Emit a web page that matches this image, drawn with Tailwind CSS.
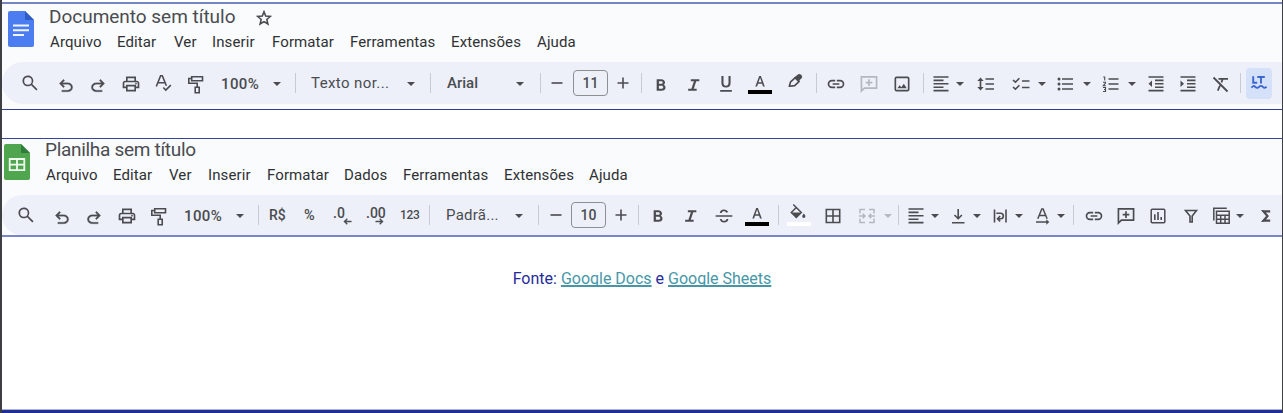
<!DOCTYPE html>
<html lang="pt-BR">
<head>
<meta charset="utf-8">
<title>Google Docs e Google Sheets</title>
<script src="https://cdn.jsdelivr.net/npm/@tailwindcss/browser@4"></script>
</head>
<body class="bg-white">
<svg class="hidden">
  <symbol id="search" viewBox="0 0 24 24"><path d="M19.6 21l-6.3-6.3A6.5 6.5 0 1 1 14.7 13.3l6.3 6.3zM9.5 14a4.5 4.5 0 1 0 0-9 4.5 4.5 0 0 0 0 9z"/></symbol>
  <symbol id="undo" viewBox="0 -960 960 960"><path d="M280-200v-80h284q63 0 109.500-40T720-420q0-60-46.500-100T564-560H312l104 104-56 56-200-200 200-200 56 56-104 104h252q97 0 166.500 63T800-420q0 94-69.500 157T564-200H280Z" stroke="currentColor" stroke-width="12"/></symbol>
  <symbol id="print" viewBox="0 -960 960 960"><path d="M640-640v-120H320v120h-80v-200h480v200h-80Zm80 180q17 0 28.500-11.500T760-500q0-17-11.500-28.500T720-540q-17 0-28.500 11.500T680-500q0 17 11.500 28.500T720-460Zm-80 260v-160H320v160h320Zm80 80H240v-160H80v-240q0-51 35-85.500t85-34.500h560q51 0 85.500 34.500T880-520v240H720v160Zm80-240v-160q0-17-11.500-28.500T760-560H200q-17 0-28.500 11.500T160-520v160h80v-80h480v80h80Z"/></symbol>
  <symbol id="spell" viewBox="0 0 20 20"><path d="M3.300 13.500L7.600 2.700h1.700l4.100 10M5 9.800h6.500M10.300 14.500l2.500 2.600 5-5" fill="none" stroke="currentColor" stroke-width="1.600"/></symbol>
  <symbol id="roller" viewBox="0 0 20 20"><path d="M5.700 1.800h10.800v3.900H5.700zM5.500 3.500H2.800v4.700h8.400v4M9.200 12.300h4v5.500h-4z" fill="none" stroke="currentColor" stroke-width="1.600"/></symbol>
  <symbol id="caret" viewBox="0 0 10 10"><path d="M1 3h8L5 7z"/></symbol>
  <symbol id="minus" viewBox="0 0 20 20"><path d="M4.500 9.200h11v1.600h-11z"/></symbol>
  <symbol id="plus" viewBox="0 0 20 20"><path d="M9.200 4.500h1.600v4.700h4.700v1.600h-4.700v4.700H9.200v-4.700H4.500V9.200h4.700z"/></symbol>
  <symbol id="bold" viewBox="0 0 24 24"><path d="M6.800 19V5h5.500c2.600 0 4.500 1.500 4.500 3.900 0 1.400-.8 2.400-1.700 2.900 1.400.5 2.300 1.700 2.300 3.300 0 2.500-2 3.900-4.700 3.900zm2.700-8.400h2.700c1.200 0 1.900-.7 1.900-1.600 0-1-.7-1.600-1.900-1.600H9.500zm0 6h3.100c1.300 0 2.100-.7 2.100-1.800s-.8-1.800-2.100-1.800H9.500z"/></symbol>
  <symbol id="italic" viewBox="0 0 24 24"><path d="M5 19v-2.400h3.900l3-9.200H8.200V5h10.200v2.400h-3.700l-3 9.200h3.500V19z"/></symbol>
  <symbol id="underline" viewBox="0 0 24 24"><path d="M5 20.500h14v1.900H5zM12 17.500c-3.500 0-5.500-2-5.500-5.600V3.500H9v8.500c0 2 1 3.200 3 3.200s3-1.200 3-3.200V3.500h2.500v8.400c0 3.600-2 5.600-5.500 5.600z"/></symbol>
  <symbol id="strike" viewBox="0 0 24 24"><path d="M2 11h20v2H2zM12 4.200c2.400 0 4.200 1 5 3.100l-2.200.9c-.4-1.100-1.300-1.900-2.800-1.900-1.600 0-2.600.7-2.700 2.200H7c0-2.500 2-4.300 5-4.300zM7 15.500h2.200c.3 1.500 1.400 2.200 2.900 2.200 1.700 0 2.800-.8 2.800-2.200h2.300c0 2.600-2 4.300-5.100 4.300-2.700 0-4.700-1.400-5.100-4.300z"/></symbol>
  <symbol id="lettera" viewBox="0 0 20 20"><path d="M5.300 14.500L9.200 4h1.700l3.900 10.500H13l-.9-2.700H8l-.9 2.700zM8.500 10.300h3.100L10.100 5.800z"/></symbol>
  <symbol id="marker" viewBox="0 0 20 20"><path d="M4.300 15.300l1.300-4.500 4.700-4.200 3.900 3.700-4.500 4.300z" fill="none" stroke="currentColor" stroke-width="1.600" stroke-linejoin="round"/><path d="M9 6.800l3.300-2.900c1.300-1.100 2.800-1 3.900 0 1.200 1.100 1.300 2.500.1 3.700L13 10.800z"/></symbol>
  <symbol id="link" viewBox="0 0 24 24"><path d="M11 17H7A5 5 0 0 1 7 7h4v2H7a3 3 0 0 0 0 6h4zm-3-4v-2h8v2zm5 4v-2h4a3 3 0 0 0 0-6h-4V7h4a5 5 0 0 1 0 10z"/></symbol>
  <symbol id="comment" viewBox="0 0 24 24"><path d="M2.900 20.500V3.500h18.200v13.500H6.500zM12 6.300v8M8 10.300h8" fill="none" stroke="currentColor" stroke-width="2"/></symbol>
  <symbol id="image" viewBox="0 0 24 24"><rect x="4" y="4" width="16" height="16" rx="1.500" fill="none" stroke="currentColor" stroke-width="2"/><path d="M6.500 17l2.700-3.500 2 2.300 3-4 3.500 5.200z"/></symbol>
  <symbol id="align" viewBox="0 0 20 20"><path d="M2.500 3h15M2.500 6.400h10M2.500 9.800h15M2.500 13.200h10M2.500 16.600h15" stroke="currentColor" stroke-width="1.600"/></symbol>
  <symbol id="spacing" viewBox="0 0 20 20"><path d="M9.500 5h8.500M9.500 10h8.500M9.500 15h8.500M4.500 5v10" stroke="currentColor" stroke-width="1.700"/><path d="M1.300 7L4.500 3.600 7.700 7zM1.300 13l3.200 3.400L7.700 13z"/></symbol>
  <symbol id="check" viewBox="0 0 20 20"><path d="M2 6l2.400 2.200 4-4M2 13l2.400 2.200 4-4M11 7h7.500M11 13.500h7.500" fill="none" stroke="currentColor" stroke-width="1.600"/></symbol>
  <symbol id="bullets" viewBox="0 0 20 20"><path d="M7 5h11M7 10h11M7 15h11" stroke="currentColor" stroke-width="1.700"/><circle cx="4" cy="5" r="1.500"/><circle cx="4" cy="10" r="1.500"/><circle cx="4" cy="15" r="1.500"/></symbol>
  <symbol id="numbers" viewBox="0 0 20 20"><path d="M7.500 5H17.500M7.500 10H17.500M7.500 15H17.500" stroke="currentColor" stroke-width="1.700"/><path d="M2.200 3h1.500v3.500M2 8.300h2.500v.7L2.300 11.700h2.600M2 13.500h2.500v4H2M3 15.500h1.500" fill="none" stroke="currentColor" stroke-width="1.100"/></symbol>
  <symbol id="outdent" viewBox="0 0 20 20"><path d="M2.500 3h15M9 6.400h8.500M9 9.800h8.500M9 13.200h8.500M2.500 16.600h15" stroke="currentColor" stroke-width="1.600"/><path d="M6 6.500v6.600L2.500 9.800z"/></symbol>
  <symbol id="indent" viewBox="0 0 20 20"><path d="M2.500 3h15M9 6.400h8.500M9 9.800h8.500M9 13.200h8.500M2.500 16.600h15" stroke="currentColor" stroke-width="1.600"/><path d="M2.500 6.500v6.600L6 9.800z"/></symbol>
  <symbol id="clear" viewBox="0 0 20 20"><path d="M2.500 3.500l14 14M7.500 4.800h9.500M11.700 5l-1.300 3.500M9 11.500l-2.200 5.200" fill="none" stroke="currentColor" stroke-width="1.800"/></symbol>
  <symbol id="lt" viewBox="0 0 20 20"><path d="M4.200 3.200v6.500h4M8.300 4h7.500M12 4v6.500" fill="none" stroke="currentColor" stroke-width="1.900"/><path d="M2.500 14.700q1.900-2.800 3.800-.8t3.800 0q1.900-2 3.800 0t3.600-.2" fill="none" stroke="currentColor" stroke-width="1.900"/></symbol>
  <symbol id="fill" viewBox="0 0 20 20"><path d="M6.300 1.500l8 8-5 5-5-5 5-5" fill="none" stroke="currentColor" stroke-width="1.500"/><path d="M4.300 9.500h10l-5 5zM16.800 10.500c1.200 1.500 1.600 2.200 1.600 2.800a1.600 1.600 0 0 1-3.200 0c0-.6.5-1.300 1.600-2.800z"/></symbol>
  <symbol id="borders" viewBox="0 0 20 20"><path d="M3.300 3.500h13.400v13H3.300zM10 3.500v13M3.300 10h13.400" fill="none" stroke="currentColor" stroke-width="1.600"/></symbol>
  <symbol id="merge" viewBox="0 0 20 20"><path d="M8 3.500H3v4M12 3.500h5v4M8 16.500H3v-4M12 16.500h5v-4M2 10h5.500M18 10h-5.500M5.800 7.700L8 10l-2.200 2.300M14.200 7.700L12 10l2.200 2.300" fill="none" stroke="currentColor" stroke-width="1.500"/></symbol>
  <symbol id="valign" viewBox="0 0 20 20"><path d="M4 16.700h12.500M10.200 3v9.500M6.500 9l3.700 3.700L13.900 9" fill="none" stroke="currentColor" stroke-width="1.600"/></symbol>
  <symbol id="wrap" viewBox="0 0 20 20"><path d="M4.500 3.500v13M16 3.500v13M6.300 7.300h4.300a2.700 2.700 0 0 1 0 5.400H8M10.200 10l-2.700 2.700 2.700 2.700" fill="none" stroke="currentColor" stroke-width="1.600"/></symbol>
  <symbol id="rotate" viewBox="0 0 20 20"><path d="M4.800 12.700L8.800 3h1.300l4 9.700M6.300 9.500h6.300M3 16h11" fill="none" stroke="currentColor" stroke-width="1.500"/><path d="M13.300 13.300v5.400l3-2.700z"/></symbol>
  <symbol id="chart" viewBox="0 0 20 20"><rect x="3.200" y="3.200" width="13.600" height="13.600" rx="1" fill="none" stroke="currentColor" stroke-width="1.500"/><path d="M6.800 8.200v5.800M10 6v8M13.200 11v3" stroke="currentColor" stroke-width="1.600"/></symbol>
  <symbol id="filter" viewBox="0 0 20 20"><path d="M4.500 4.500h11L11.200 10v6H9v-6z" fill="none" stroke="currentColor" stroke-width="1.600"/></symbol>
  <symbol id="table" viewBox="0 0 20 20"><path d="M1.800 14.500V2.300h13M4.500 5.200h12.700v12H4.500zM4.500 9.200h12.700M4.500 13.200h12.700M8.700 9.200v8M13 9.200v8" fill="none" stroke="currentColor" stroke-width="1.500"/></symbol>
  <symbol id="sigma" viewBox="0 0 20 20"><path d="M14.200 5.400H7.500L11.500 10l-4 4.700h6.700" fill="none" stroke="currentColor" stroke-width="2.200"/><path d="M5.300 4.300h2.500v2.500zM5.300 15.800h2.500v-2.500z"/></symbol>
</svg>

<div class="w-[1283px] h-[413px] overflow-hidden flex flex-col border-l-2 border-r border-[#3e3f43] font-[Roboto,sans-serif] text-[#4a4c50] whitespace-nowrap">
  <!-- Docs -->
  <section class="mt-[2px] h-[108px] shrink-0 border-t-2 border-t-[#7584c5] border-b border-b-[#303d91] bg-[#f9fbfd] flex flex-col">
    <div class="flex h-[58px]">
      <svg class="ml-[6px] mt-[7px] w-[26px] h-[36px] shrink-0" viewBox="0 0 26 36"><path d="M2 0H17l9 9v25a2 2 0 0 1-2 2H2a2 2 0 0 1-2-2V2a2 2 0 0 1 2-2z" fill="#4b7df0"/><path d="M17 0l9 9h-9z" fill="#2f5cc5"/><path d="M5 14.500h16M5 19.200h16M5 23.900h11" stroke="#f1f5ff" stroke-width="2"/></svg>
      <div class="ml-[15px]">
        <div class="flex h-[26px] items-center">
          <h1 class="mt-px w-[207px] text-[19px] -tracking-[.02px]">Documento sem título</h1>
          <svg class="w-[16px] h-[16px] mt-[2px]" viewBox="0 0 16 16"><path d="M8 1.800l1.700 4.300 4.600.4-3.500 3 1.100 4.500L8 11.600 4.100 14l1.100-4.500-3.500-3 4.600-.4z" fill="none" stroke="currentColor" stroke-width="1.600"/></svg>
        </div>
        <nav class="ml-[1px] flex h-[25px] items-center text-[15px] tracking-[.1px] text-[#303134]">
          <a class="w-[67px]">Arquivo</a><a class="w-[57px]">Editar</a><a class="w-[38px]">Ver</a><a class="w-[60px]">Inserir</a><a class="w-[78px]">Formatar</a><a class="w-[101px]">Ferramentas</a><a class="w-[86px]">Extensões</a><a>Ajuda</a>
        </nav>
      </div>
    </div>
    <div class="h-[42px] rounded-l-[21px] bg-[#edf0f9] flex items-center text-[15px] font-medium fill-current *:shrink-0">
      <svg class="ml-[18px] size-5"><use href="#search"/></svg>
      <svg class="ml-[16px] mt-[5px] size-5"><use href="#undo"/></svg>
      <svg class="ml-[12px] mt-[5px] size-5 -scale-x-100"><use href="#undo"/></svg>
      <svg class="ml-[13px] mt-[2px] size-5"><use href="#print"/></svg>
      <svg class="ml-[12px] size-5"><use href="#spell"/></svg>
      <svg class="ml-[13px] mt-[4px] size-5"><use href="#roller"/></svg>
      <span class="ml-[15px] mt-[2px] w-[40px] tracking-[.35px]">100%</span>
      <svg class="ml-[11px] mt-[2px] size-[10px]"><use href="#caret"/></svg>
      <i class="ml-[13px] w-px h-5 bg-[#c7cad1]"></i>
      <span class="ml-[15px] w-[78px] font-[450] tracking-[.4px]">Texto nor...</span>
      <svg class="ml-[17px] mt-[2px] size-[10px]"><use href="#caret"/></svg>
      <i class="ml-[14px] w-px h-5 bg-[#c7cad1]"></i>
      <span class="ml-[16px] w-[34px]">Arial</span>
      <svg class="ml-[34px] mt-[2px] size-[10px]"><use href="#caret"/></svg>
      <i class="ml-[15px] w-px h-5 bg-[#c7cad1]"></i>
      <svg class="ml-[6px] size-5"><use href="#minus"/></svg>
      <span class="ml-[6px] w-[35px] h-[26px] border border-[#8d9092] rounded flex items-center justify-center text-[14px]">11</span>
      <svg class="ml-[5px] size-5"><use href="#plus"/></svg>
      <i class="ml-[8px] w-px h-5 bg-[#c7cad1]"></i>
      <svg class="ml-[9px] mt-[3px] size-5"><use href="#bold"/></svg>
      <svg class="ml-[13px] mt-[3px] size-5"><use href="#italic"/></svg>
      <svg class="ml-[12px] size-5"><use href="#underline"/></svg>
      <span class="ml-[12px] w-[24px] h-[22px] border-b-4 border-black flex justify-center"><svg class="size-5"><use href="#lettera"/></svg></span>
      <svg class="ml-[13px] mb-[4px] size-5"><use href="#marker"/></svg>
      <i class="ml-[11px] w-px h-5 bg-[#c7cad1]"></i>
      <svg class="ml-[9px] mt-[2px] size-5"><use href="#link"/></svg>
      <svg class="ml-[13px] mt-[2px] size-5 text-[#b4b7bf]"><use href="#comment"/></svg>
      <svg class="ml-[13px] mt-[2px] size-5"><use href="#image"/></svg>
      <i class="ml-[11px] w-px h-5 bg-[#c7cad1]"></i>
      <svg class="ml-[7px] mt-[2px] size-5"><use href="#align"/></svg>
      <svg class="ml-[4px] mt-[2px] size-[10px]"><use href="#caret"/></svg>
      <svg class="ml-[11px] mt-[2px] size-5"><use href="#spacing"/></svg>
      <svg class="ml-[15px] mt-[2px] size-5"><use href="#check"/></svg>
      <svg class="ml-[6px] mt-[2px] size-[10px]"><use href="#caret"/></svg>
      <svg class="ml-[8px] mt-[2px] size-5"><use href="#bullets"/></svg>
      <svg class="ml-[7px] mt-[2px] size-[10px]"><use href="#caret"/></svg>
      <svg class="ml-[9px] mt-[2px] size-5"><use href="#numbers"/></svg>
      <svg class="ml-[6px] mt-[2px] size-[10px]"><use href="#caret"/></svg>
      <svg class="ml-[9px] mt-[2px] size-5"><use href="#outdent"/></svg>
      <svg class="ml-[12px] mt-[2px] size-5"><use href="#indent"/></svg>
      <svg class="ml-[13px] mt-[2px] size-5"><use href="#clear"/></svg>
      <i class="ml-[9px] w-px h-5 bg-[#c7cad1]"></i>
      <span class="ml-[5px] w-[26px] h-[31px] rounded bg-[#d5e0f9] text-[#3d67d0] flex items-center justify-center"><svg class="size-5"><use href="#lt"/></svg></span>
    </div>
  </section>

  <!-- Sheets -->
  <section class="mt-[28px] h-[99px] shrink-0 border-t border-t-[#3644a1] border-b-2 border-b-[#7886c7] bg-[#f9fbfd] flex flex-col">
    <div class="flex h-[56px]">
      <svg class="ml-[2px] mt-[5px] w-[26px] h-[36px] shrink-0" viewBox="0 0 26 36"><path d="M2 0H17l9 9v25a2 2 0 0 1-2 2H2a2 2 0 0 1-2-2V2a2 2 0 0 1 2-2z" fill="#4fa64f"/><path d="M17 0l9 9h-9z" fill="#2f7d3b"/><path d="M5.700 15h14.600v11.200H5.700zM13 15v11.200M5.700 20.600h14.600" fill="none" stroke="#f1faf1" stroke-width="1.800"/></svg>
      <div class="ml-[15px]">
        <h1 class="h-[22px] leading-[21px] text-[19px] -tracking-[.3px]">Planilha sem título</h1>
        <nav class="ml-[1px] flex h-[28px] items-center text-[15px] tracking-[.1px] text-[#303134]">
          <a class="w-[67px]">Arquivo</a><a class="w-[56px]">Editar</a><a class="w-[39px]">Ver</a><a class="w-[59px]">Inserir</a><a class="w-[77px]">Formatar</a><a class="w-[59px]">Dados</a><a class="w-[101px]">Ferramentas</a><a class="w-[85px]">Extensões</a><a>Ajuda</a>
        </nav>
      </div>
    </div>
    <div class="h-[40px] rounded-l-[20px] bg-[#edf0f9] flex items-center text-[15px] font-medium fill-current *:shrink-0">
      <svg class="ml-[14px] size-5"><use href="#search"/></svg>
      <svg class="ml-[16px] mt-[5px] size-5"><use href="#undo"/></svg>
      <svg class="ml-[12px] mt-[5px] size-5 -scale-x-100"><use href="#undo"/></svg>
      <svg class="ml-[13px] mt-[2px] size-5"><use href="#print"/></svg>
      <svg class="ml-[12px] mt-[4px] size-5"><use href="#roller"/></svg>
      <span class="ml-[15px] mt-[2px] w-[40px] tracking-[.35px]">100%</span>
      <svg class="ml-[11px] mt-[2px] size-[10px]"><use href="#caret"/></svg>
      <i class="ml-[13px] w-px h-5 bg-[#c7cad1]"></i>
      <span class="ml-[10px] mt-px w-[20px] text-[14px]">R$</span>
      <span class="ml-[15px] mt-px w-[14px] text-[14.500px]">%</span>
      <span class="ml-[15px] w-[20px] h-[22px] text-[14px] leading-[18px] relative">.0<svg class="absolute left-[10px] top-[14px] w-[9px] h-[7px]" viewBox="0 0 9 7"><path d="M8.500 3.500H2M4.300.8L1.500 3.500l2.800 2.700" fill="none" stroke="currentColor" stroke-width="1.400"/></svg></span>
      <span class="ml-[13px] w-[20px] h-[22px] text-[14px] leading-[18px] relative">.00<svg class="absolute left-[9px] top-[14px] w-[9px] h-[7px]" viewBox="0 0 9 7"><path d="M.5 3.500H7M4.700.8l2.800 2.700-2.800 2.700" fill="none" stroke="currentColor" stroke-width="1.400"/></svg></span>
      <span class="ml-[14px] w-[20px] text-[12px] -tracking-[.3px]">123</span>
      <i class="ml-[9px] w-px h-5 bg-[#c7cad1]"></i>
      <span class="ml-[16px] w-[52px] font-[450] tracking-[.25px]">Padrã...</span>
      <svg class="ml-[16px] mt-[2px] size-[10px]"><use href="#caret"/></svg>
      <i class="ml-[14px] w-px h-5 bg-[#c7cad1]"></i>
      <svg class="ml-[7px] size-5"><use href="#minus"/></svg>
      <span class="ml-[5px] w-[35px] h-[26px] border border-[#8d9092] rounded flex items-center justify-center text-[14px]">10</span>
      <svg class="ml-[5px] size-5"><use href="#plus"/></svg>
      <i class="ml-[7px] w-px h-5 bg-[#c7cad1]"></i>
      <svg class="ml-[9px] mt-[2px] size-5"><use href="#bold"/></svg>
      <svg class="ml-[13px] mt-[2px] size-5"><use href="#italic"/></svg>
      <svg class="ml-[13px] mt-[2px] size-5"><use href="#strike"/></svg>
      <span class="ml-[11px] w-[24px] h-[22px] border-b-4 border-black flex justify-center"><svg class="size-5"><use href="#lettera"/></svg></span>
      <i class="ml-[9px] w-px h-5 bg-[#c7cad1]"></i>
      <span class="ml-[8px] w-[24px] h-[22px] border-b-4 border-white flex"><svg class="size-5 -mt-px"><use href="#fill"/></svg></span>
      <svg class="ml-[12px] mt-[2px] size-5"><use href="#borders"/></svg>
      <svg class="ml-[14px] mt-[2px] size-5 text-[#b4b7bf]"><use href="#merge"/></svg>
      <svg class="ml-[6px] mt-[2px] size-[10px] fill-[#b4b7bf]"><use href="#caret"/></svg>
      <i class="ml-[5px] w-px h-5 bg-[#c7cad1]"></i>
      <svg class="ml-[7px] mt-[2px] size-5"><use href="#align"/></svg>
      <svg class="ml-[4px] mt-[2px] size-[10px]"><use href="#caret"/></svg>
      <svg class="ml-[8px] mt-[2px] size-5"><use href="#valign"/></svg>
      <svg class="ml-[4px] mt-[2px] size-[10px]"><use href="#caret"/></svg>
      <svg class="ml-[8px] mt-[2px] size-5"><use href="#wrap"/></svg>
      <svg class="ml-[4px] mt-[2px] size-[10px]"><use href="#caret"/></svg>
      <svg class="ml-[9px] mt-[2px] size-5"><use href="#rotate"/></svg>
      <svg class="ml-[3px] mt-[2px] size-[10px]"><use href="#caret"/></svg>
      <i class="ml-[7px] w-px h-5 bg-[#c7cad1]"></i>
      <svg class="ml-[10px] mt-[2px] size-5"><use href="#link"/></svg>
      <svg class="ml-[12px] mt-[2px] size-5"><use href="#comment"/></svg>
      <svg class="ml-[12px] mt-[2px] size-5"><use href="#chart"/></svg>
      <svg class="ml-[13px] mt-[2px] size-5"><use href="#filter"/></svg>
      <svg class="ml-[11px] mt-[2px] size-5"><use href="#table"/></svg>
      <svg class="ml-[3px] mt-[2px] size-[10px]"><use href="#caret"/></svg>
      <svg class="ml-[11px] mt-[2px] size-5"><use href="#sigma"/></svg>
    </div>
  </section>

  <p class="mt-[30px] text-center text-[16px] leading-6 text-[#242c9b]">Fonte: <a class="underline text-[#4796a8] decoration-2 [text-decoration-skip-ink:none]">Google Docs</a> e <a class="underline text-[#4796a8] decoration-2 [text-decoration-skip-ink:none]">Google Sheets</a></p>
  <div class="mt-auto h-[4px] border-t border-[#aeb4d8] bg-[#202e96]"></div>
</div>
</body>
</html>
